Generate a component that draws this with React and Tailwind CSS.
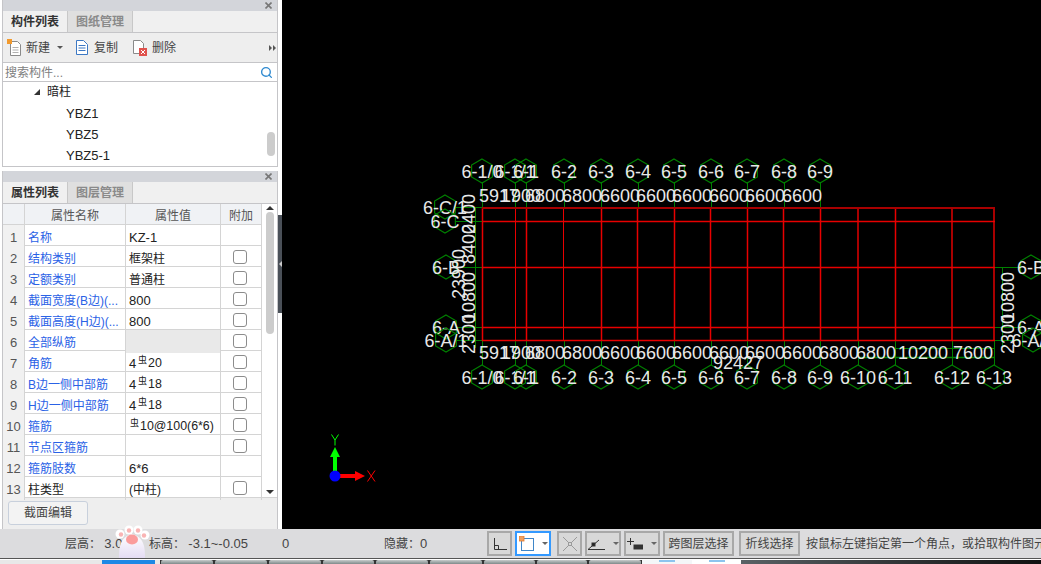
import { Search } from "lucide-react";

const rows = [
  { n: 1, name: "名称", value: "KZ-1", check: false },
  { n: 2, name: "结构类别", value: "框架柱", check: true },
  { n: 3, name: "定额类别", value: "普通柱", check: true },
  { n: 4, name: "截面宽度(B边)(...", value: "800", check: true },
  { n: 5, name: "截面高度(H边)(...", value: "800", check: true },
  { n: 6, name: "全部纵筋", value: "", check: true, grey: true },
  { n: 7, name: "角筋", pre: "4", bar: true, value: "20", check: true },
  { n: 8, name: "B边一侧中部筋", pre: "4", bar: true, value: "18", check: true },
  { n: 9, name: "H边一侧中部筋", pre: "4", bar: true, value: "18", check: true },
  { n: 10, name: "箍筋", bar: true, value: "10@100(6*6)", check: true },
  { n: 11, name: "节点区箍筋", value: "", check: true },
  { n: 12, name: "箍筋肢数", value: "6*6", check: false },
  { n: 13, name: "柱类型", value: "(中柱)", check: true, black: true },
];

const vLines = [
  { x: 482.5, w: 1.5 }, { x: 515.5, w: 1 }, { x: 526.5, w: 1.5 }, { x: 563.5, w: 1 }, { x: 601.5, w: 1.5 },
  { x: 637.5, w: 1.5 }, { x: 674.5, w: 1.5 }, { x: 710.5, w: 1.5 }, { x: 747.5, w: 1.5 }, { x: 783.5, w: 1.5 },
  { x: 820.5, w: 1.5 }, { x: 858, thick: true }, { x: 895.5, w: 1.5 }, { x: 952, thick: true }, { x: 994, thick: true },
];
const hLines = [
  { y: 208, thick: true }, { y: 221.5, w: 1.5 }, { y: 267.5, w: 1.5 }, { y: 327.5, w: 1.5 }, { y: 340.5, w: 1.5 },
];
const topLabels = [
  ["6-1/0", 482], ["6-1/1", 515], ["6-1", 526], ["6-2", 564], ["6-3", 601], ["6-4", 638],
  ["6-5", 674], ["6-6", 711], ["6-7", 747], ["6-8", 784], ["6-9", 820],
];
const bottomLabels = [
  ...topLabels, ["6-10", 858], ["6-11", 895], ["6-12", 952], ["6-13", 994],
];
const topDims = [
  ["5917", 499], ["1900", 521], ["6800", 545], ["6800", 582], ["6600", 620], ["6600", 656],
  ["6600", 692], ["6600", 729], ["6600", 765], ["6600", 802],
];
const bottomDims = [
  ...topDims, ["6800", 839], ["6800", 876], ["10200", 923], ["7600", 973],
];
const sideHex = [
  ["6-C/1", 445, 207], ["6-C", 445, 221], ["6-B", 446, 267], ["6-A", 446, 327], ["6-A/1", 446, 340],
];
const rightHex = [
  ["6-B", 1031, 267], ["6-A", 1031, 327], ["6-A/1", 1033, 340],
];
const leftDims = [
  ["2400", 214], ["8400", 244], ["10800", 297], ["2300", 334],
];

const green = "#008000";

function hexPoints(cx, cy) {
  const r = 12;
  const w = 10.4;
  return `${cx},${cy - r} ${cx + w},${cy - r / 2} ${cx + w},${cy + r / 2} ${cx},${cy + r} ${cx - w},${cy + r / 2} ${cx - w},${cy - r / 2}`;
}

function Axis({ label, cx, cy }) {
  return (
    <g>
      <polygon points={hexPoints(cx, cy)} fill="none" stroke={green} strokeWidth="1.2" />
      <text x={cx} y={cy + 7} textAnchor="middle" fontSize="18" fill="#e8e8e8">{label}</text>
    </g>
  );
}

function Drawing() {
  return (
    <svg width="759" height="529" viewBox="282 0 759 529" className="block font-['Liberation_Sans',sans-serif]">
      <rect x="282" y="0" width="759" height="529" fill="#000" />
      {/* extension lines */}
      <g stroke={green} strokeWidth="1">
        {topLabels.map(([l, x]) => <line key={l} x1={x + 0.5} y1="182" x2={x + 0.5} y2="208" />)}
        {bottomLabels.map(([l, x]) => <line key={l} x1={x + 0.5} y1="340" x2={x + 0.5} y2="365" />)}
        {sideHex.map(([l, , y]) => <line key={l} x1="456" y1={y + 0.5} x2="482" y2={y + 0.5} />)}
        {rightHex.map(([l, , y]) => <line key={l} x1="994" y1={y + 0.5} x2="1020" y2={y + 0.5} />)}
        <line x1="475.5" y1="207" x2="475.5" y2="348" />
        <line x1="1002.5" y1="267" x2="1002.5" y2="348" />
        <line x1="895" y1="348.5" x2="994" y2="348.5" />
        <line x1="858" y1="357.5" x2="994" y2="357.5" strokeWidth="1.5" />
      </g>
      {/* grid */}
      {vLines.map((v) => (
        <line key={v.x} x1={v.x} y1="208" x2={v.x} y2="341" stroke={v.thick ? "#a80000" : "#e80000"} strokeWidth={v.thick ? 2 : v.w} />
      ))}
      {hLines.map((h) => (
        <line key={h.y} x1="482" y1={h.y} x2="995" y2={h.y} stroke={h.thick ? "#a80000" : "#e80000"} strokeWidth={h.thick ? 2 : h.w} />
      ))}
      {topLabels.map(([l, x]) => <Axis key={l} label={l} cx={x} cy={171} />)}
      {bottomLabels.map(([l, x]) => <Axis key={l} label={l} cx={x} cy={377} />)}
      {sideHex.map(([l, x, y]) => <Axis key={l} label={l} cx={x} cy={y} />)}
      {rightHex.map(([l, x, y]) => <Axis key={l} label={l} cx={x} cy={y} />)}
      <g fontSize="18" fill="#e8e8e8" textAnchor="middle">
        {topDims.map(([t, x], i) => <text key={i} x={x} y="202">{t}</text>)}
        {bottomDims.map(([t, x], i) => <text key={i} x={x} y="359">{t}</text>)}
        <text x="738" y="369">92427</text>
        {leftDims.map(([t, y]) => <text key={t} x="475" y={y} transform={`rotate(-90 475 ${y})`}>{t}</text>)}
        <text x="465" y="274" transform="rotate(-90 465 274)">23900</text>
        <text x="1014" y="297" transform="rotate(-90 1014 297)">10800</text>
        <text x="1014" y="334" transform="rotate(-90 1014 334)">2300</text>
      </g>
      {/* UCS icon */}
      <rect x="333" y="456" width="4" height="18" fill="#00ff00" />
      <polygon points="335,447 340,457 330,457" fill="#00ff00" />
      <rect x="338" y="474" width="18" height="4" fill="#ff0000" />
      <polygon points="365,476 355,471 355,481" fill="#ff0000" />
      <circle cx="335" cy="476" r="5.5" fill="#0000ff" />
      <path d="M331.5 434.5 L335 440 L338.5 434.5 M335 440 L335 445.5" stroke="#00ff00" strokeWidth="1" fill="none" />
      <path d="M367.5 470.5 L375 481.5 M375 470.5 L367.5 481.5" stroke="#ff0000" strokeWidth="1" fill="none" />
    </svg>
  );
}

function CloseBar() {
  return (
    <div className="h-[11px] bg-[#d3d5da] flex items-center justify-end pr-[5px]">
      <svg width="7" height="7" viewBox="0 0 7 7" stroke="#777" strokeWidth="1.6">
        <path d="M0.5 0.5L6.5 6.5M6.5 0.5L0.5 6.5" />
      </svg>
    </div>
  );
}

function Tabs({ active, other }) {
  return (
    <div className="h-[22px] flex bg-[#f0f0f0] border-b border-[#c5c5c8] text-[12px] font-bold">
      <div className="w-[64px] flex items-center justify-center text-[#333]">{active}</div>
      <div className="w-[66px] flex items-center justify-center bg-[#dfdfdf] text-[#8a8a8a] border-x border-[#c8c8c8]">{other}</div>
    </div>
  );
}

function Toolbar() {
  return (
    <div className="h-[30px] flex items-center bg-[#eeeeee] border-b border-[#c5c5c8] text-[12px] text-[#444] pl-[4px]">
      <svg width="16" height="18" viewBox="0 0 16 18" className="shrink-0">
        <path d="M3.5 2.5h7l3 3v11h-10z" fill="#fff" stroke="#8a8a8a" />
        <path d="M5.5 8.5h6M5.5 11h6M5.5 13.5h6" stroke="#b0b0b0" />
        <rect x="0" y="0" width="5" height="5" fill="#f29a2e" />
      </svg>
      <span className="ml-[3px]">新建</span>
      <span className="ml-[7px] w-0 h-0 border-x-[3px] border-x-transparent border-t-[3px] border-t-[#555]" />
      <svg width="14" height="17" viewBox="0 0 14 17" className="ml-[12px] shrink-0">
        <path d="M1.5 1.5h7l4 4v10h-11z" fill="#fff" stroke="#3c78c4" />
        <path d="M3.5 6.5h7M3.5 9h7M3.5 11.5h7" stroke="#3c78c4" />
      </svg>
      <span className="ml-[5px]">复制</span>
      <svg width="16" height="17" viewBox="0 0 16 17" className="ml-[14px] shrink-0">
        <path d="M1.5 1.5h7l3 3v10h-10z" fill="#fff" stroke="#8a8a8a" />
        <rect x="7" y="9" width="8" height="8" fill="#e0524d" />
        <path d="M9 11l4 4M13 11l-4 4" stroke="#fff" />
      </svg>
      <span className="ml-[4px]">删除</span>
      <div className="ml-auto mr-[1px] flex gap-px">
        <span className="w-0 h-0 border-y-[3px] border-y-transparent border-l-[3px] border-l-[#555]" />
        <span className="w-0 h-0 border-y-[3px] border-y-transparent border-l-[3px] border-l-[#555]" />
      </div>
    </div>
  );
}

function TreePanel() {
  return (
    <div className="h-[167px] flex flex-col border-x border-b border-[#c5c5c8] bg-white">
      <CloseBar />
      <Tabs active="构件列表" other="图纸管理" />
      <Toolbar />
      <div className="h-[19px] flex items-center border-b border-[#c5c5c8] pl-[2px] pr-[4px]">
        <span className="text-[12px] text-[#808080] pt-[2px]">搜索构件...</span>
        <Search className="ml-auto text-[#2f8ad0]" size={13} strokeWidth={2.5} />
      </div>
      <div className="flex-1 flex min-h-0 text-[12px] text-[#222]">
        <div className="flex-1">
          <div className="h-[21px] flex items-center pl-[31px] -mt-[1px] mb-[1px]">
            <span className="w-0 h-0 border-l-[6px] border-l-transparent border-b-[6px] border-b-[#333]" />
            <span className="ml-[7px]">暗柱</span>
          </div>
          <div className="h-[21px] flex items-center pl-[63px] text-[13px]">YBZ1</div>
          <div className="h-[21px] flex items-center pl-[63px] text-[13px]">YBZ5</div>
          <div className="h-[21px] flex items-center pl-[63px] text-[13px]">YBZ5-1</div>
        </div>
        <div className="w-[10px] pt-[50px]">
          <div className="w-[8px] h-[24px] rounded-full bg-[#cccccc]" />
        </div>
      </div>
    </div>
  );
}

function Row({ row }) {
  const nameColor = row.black ? "text-[#222]" : "text-[#2a62e6]";
  return (
    <div className="h-[21px] grid grid-cols-[22px_101px_95px_41px] border-b border-[#d4d4d4]">
      <div className="bg-[#f1f1f1] border-r border-[#d4d4d4] flex items-center justify-center pt-[3px] text-[13px] text-[#555]">{row.n}</div>
      <div className={`border-r border-[#d4d4d4] flex items-center pl-[3px] pt-[3px] whitespace-nowrap overflow-hidden ${nameColor}`}>{row.name}</div>
      <div className={`border-r border-[#d4d4d4] flex items-center pl-[3px] pt-[3px] whitespace-nowrap text-[#222] ${row.grey ? "bg-[#e9e9e9]" : ""} ${/^[0-9A-Z]/.test(row.value) ? "text-[13px]" : ""}`}>
        {row.bar && (
          <>
            {row.pre && <span className="text-[13px] w-[8px]">{row.pre}</span>}
            <span className="text-[9px] w-[9px] -mt-[6px] ml-[1px]">虫</span>
          </>
        )}
        <span className={row.bar ? "ml-px text-[12.4px]" : ""}>{row.value}</span>
      </div>
      <div className="border-r border-[#d4d4d4] flex items-center justify-center pr-[3px]">
        {row.check && <div className="w-[14px] h-[14px] rounded-[3px] border border-[#8c8c8c] bg-white" />}
      </div>
    </div>
  );
}

function PropertyPanel() {
  return (
    <div className="mt-[4px] flex-1 flex flex-col border-x border-[#c5c5c8] bg-[#eeeeee]">
      <CloseBar />
      <Tabs active="属性列表" other="图层管理" />
      <div className="h-[294px] flex bg-white text-[12px]">
        <div className="w-[259px]">
          <div className="h-[21px] grid grid-cols-[22px_101px_95px_41px] border-b border-[#d4d4d4] bg-[#f0f2f5] text-[#555]">
            <div className="border-r border-[#d4d4d4]" />
            <div className="border-r border-[#d4d4d4] flex items-center justify-center pt-[3px]">属性名称</div>
            <div className="border-r border-[#d4d4d4] flex items-center justify-center pt-[3px]">属性值</div>
            <div className="border-r border-[#d4d4d4] flex items-center justify-center pt-[3px]">附加</div>
          </div>
          {rows.map((row) => <Row key={row.n} row={row} />)}
        </div>
        <div className="flex-1 flex flex-col items-center border-b border-[#d4d4d4] pt-[2px] pb-[3px]">
          <span className="w-0 h-0 border-x-[4px] border-x-transparent border-b-[4px] border-b-[#333]" />
          <div className="mt-[2px] w-[8px] h-[122px] rounded-full bg-[#cccccc]" />
          <span className="mt-auto w-0 h-0 border-x-[4px] border-x-transparent border-t-[4px] border-t-[#333]" />
        </div>
      </div>
      <div className="flex-1 pl-[5px] pt-[3px]">
        <button className="w-[80px] h-[24px] rounded-[3px] border border-[#c8d0dc] bg-[#f3f3f3] text-[12px] text-[#444]">截面编辑</button>
      </div>
    </div>
  );
}

function IconButton({ w, active, children }) {
  return (
    <div className={`h-[25px] ${w} flex items-center justify-center border-2 ${active ? "border-[#3399ff] bg-white" : "border-[#a8a8a8] bg-[#d8d8d8]"}`}>
      {children}
    </div>
  );
}

function Caret() {
  return <span className="ml-[8px] w-0 h-0 border-x-[3px] border-x-transparent border-t-[3px] border-t-[#666]" />;
}

function StatusBar() {
  return (
    <div className="h-[29px] flex items-center bg-[#dcdcde] text-[12px] text-[#444] whitespace-nowrap overflow-hidden">
      <span className="ml-[65px] w-[84px] shrink-0">层高： <span className="text-[13px]">3.0</span></span>
      <span className="w-[133px] shrink-0">标高： <span className="text-[13px]">-3.1~-0.05</span></span>
      <span className="w-[102px] shrink-0 text-[13px]">0</span>
      <span className="w-[103px] shrink-0">隐藏：<span className="text-[13px]">0</span></span>
      <div className="flex items-center gap-[3px] shrink-0">
        <IconButton w="w-[25px]">
          <svg width="14" height="12" viewBox="0 0 14 12" fill="none" stroke="#333">
            <path d="M1.5 0v11.5H14M1.5 7.5H5.5V11.5" />
          </svg>
        </IconButton>
        <IconButton w="w-[36px]" active>
          <svg width="15" height="15" viewBox="0 0 15 15" fill="none">
            <rect x="2.5" y="2.5" width="12" height="12" stroke="#3f86c8" />
            <rect x="0" y="0" width="5" height="5" fill="#f0a060" stroke="#e07a30" strokeWidth="0.8" />
          </svg>
          <Caret />
        </IconButton>
        <div className="ml-[3px]">
          <IconButton w="w-[25px]">
            <svg width="14" height="14" viewBox="0 0 14 14" fill="none" stroke="#9a9a9a">
              <path d="M0 0L14 14M14 0L0 14" />
              <rect x="5.5" y="5.5" width="3" height="3" fill="#d8d8d8" />
            </svg>
          </IconButton>
        </div>
        <IconButton w="w-[36px]">
          <svg width="17" height="13" viewBox="0 0 17 13" fill="none" stroke="#333">
            <path d="M0 12.5H17M0 12.5L11 3" />
            <rect x="4" y="6" width="3" height="3" fill="#222" />
          </svg>
          <Caret />
        </IconButton>
        <IconButton w="w-[36px]">
          <svg width="16" height="12" viewBox="0 0 16 12" fill="none" stroke="#333">
            <path d="M3.5 0v7M0 3.5h7" />
            <rect x="7" y="7" width="9" height="4" fill="#333" />
          </svg>
          <Caret />
        </IconButton>
        <IconButton w="w-[71px]">跨图层选择</IconButton>
        <div className="ml-[2px]">
          <IconButton w="w-[61px]">折线选择</IconButton>
        </div>
      </div>
      <span className="ml-[6px] shrink-0">按鼠标左键指定第一个角点，或拾取构件图元</span>
    </div>
  );
}

function TaskBar() {
  const items = [
    "w-[52px]", "w-[52px]", "w-[52px]", "w-[51px]", "w-[52px]", "w-[52px]", "w-[51px]", "w-[50px]", "w-[52px]",
  ];
  return (
    <div className="h-[6px] border-t border-[#555] bg-white flex items-end overflow-hidden">
      <div className="w-[160px] h-[4px] bg-[#e8e8e8] flex">
        <div className="ml-[102px] w-[53px] h-full bg-[#1e88e5]" />
      </div>
      <div className="flex h-[4px] bg-[#333] gap-[2px] px-[1px]">
        {items.map((w, i) => (
          <div key={i} className={`${w} h-full rounded-t-[2px] bg-gradient-to-b from-[#c8cccc] to-[#7f8a8a]`} />
        ))}
      </div>
      <div className="w-[50px] h-[4px] bg-[#f4f6f8] flex justify-center"><div className="w-[16px] h-[2px] bg-[#8cc4ee]" /></div>
      <div className="w-[49px] h-[4px] bg-white flex justify-center"><div className="w-[16px] h-[2px] bg-[#8cc4ee]" /></div>
      <div className="flex-1 h-[4px] bg-gradient-to-r from-[#5a6266] to-[#111]" />
    </div>
  );
}

function Paw() {
  return (
    <svg width="36" height="38" viewBox="0 0 36 38" className="absolute left-[114px] top-[525px]">
      <defs>
        <linearGradient id="pawBody" x1="0" y1="0" x2="0" y2="1">
          <stop offset="0" stopColor="#ffffff" />
          <stop offset="1" stopColor="#e4dcf4" />
        </linearGradient>
      </defs>
      <path d="M5 33C5 22 6 12 18 9C30 12 31 22 31 33Z" fill="url(#pawBody)" />
      <circle cx="6" cy="9" r="4.5" fill="#fff" />
      <circle cx="15" cy="5" r="4.5" fill="#fff" />
      <circle cx="24" cy="5" r="4.5" fill="#fff" />
      <circle cx="31" cy="10" r="4.5" fill="#fff" />
      <circle cx="7" cy="9.5" r="2.2" fill="#f9b4b4" />
      <circle cx="15" cy="5.5" r="2.2" fill="#f9b4b4" />
      <circle cx="24" cy="5.5" r="2.2" fill="#f9b4b4" />
      <circle cx="30" cy="10.5" r="2.2" fill="#f9b4b4" />
      <ellipse cx="18" cy="14.5" rx="6" ry="5" fill="#fb9c9c" />
    </svg>
  );
}

export default function App() {
  return (
    <div className="relative w-[1041px] h-[564px] overflow-hidden bg-white font-['Liberation_Sans','Noto_Sans_CJK_SC',sans-serif] text-[12px]">
      <div className="h-[529px] flex">
        <div className="w-[278px] pl-[2px] flex flex-col">
          <TreePanel />
          <PropertyPanel />
        </div>
        <div className="w-[4px] bg-white pt-[215px]">
          <div className="h-[98px] bg-[#4a5058] flex items-center justify-center">
            <span className="w-0 h-0 border-y-[3px] border-y-transparent border-r-[3px] border-r-[#ccc]" />
          </div>
        </div>
        <Drawing />
      </div>
      <StatusBar />
      <TaskBar />
      <Paw />
    </div>
  );
}
